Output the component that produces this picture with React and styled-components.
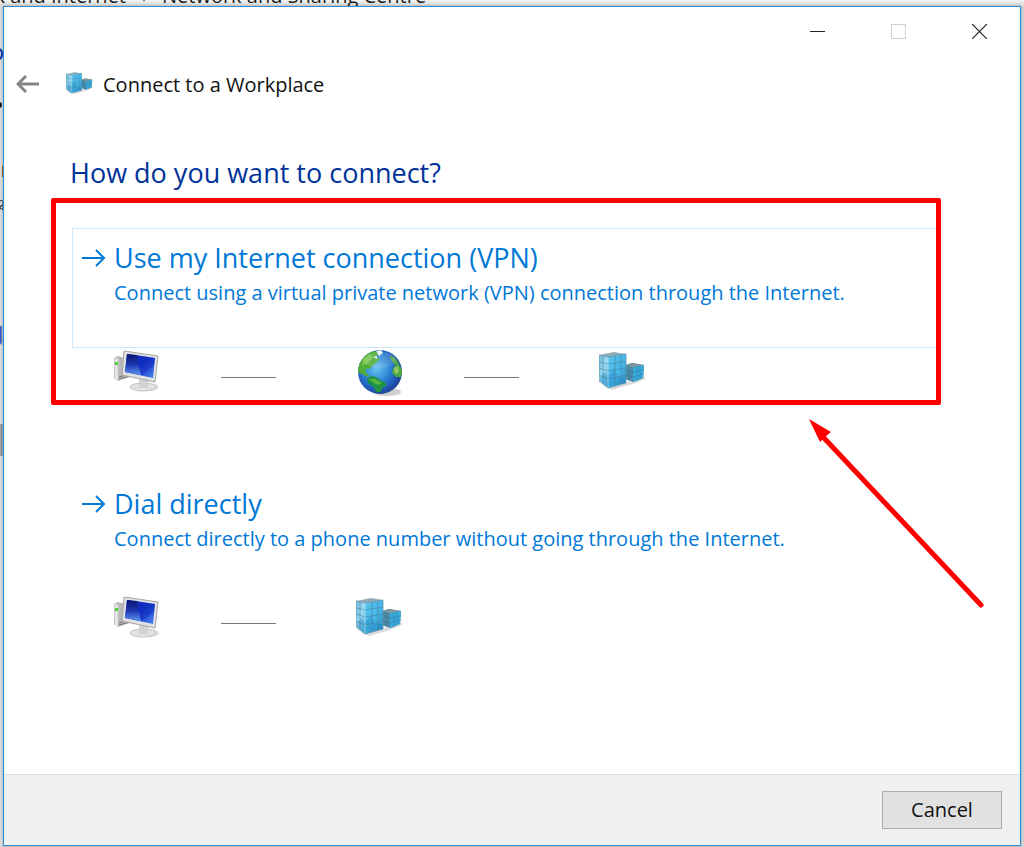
import React from "react";
import styled, { createGlobalStyle } from "styled-components";

const GlobalStyle = createGlobalStyle`
  * { box-sizing: border-box; }
  body {
    margin: 0;
    background: #d6d6d6;
    font-family: "Open Sans", "Noto Sans", sans-serif;
  }
`;

const Desktop = styled.div`
  display: flex;
  flex-direction: column;
  min-height: 100vh;
`;

const Breadcrumb = styled.nav`
  display: flex;
  align-items: flex-end;
  gap: 14px;
  height: 6px;
  overflow: hidden;
  background: linear-gradient(#f2f2f2, #dcdcdc);
  color: #1c1c1c;
  font-size: 20px;
  line-height: 20px;
  white-space: nowrap;
`;

const Crumb = styled.span`
  flex: none;
`;

const CrumbStart = styled(Crumb)`
  width: 126px;
  direction: rtl;
  overflow: hidden;
`;

const Backdrop = styled.div`
  display: flex;
  flex: 1;
  padding: 0 3px 1px 0;
`;

const EdgeArt = styled.svg`
  flex: none;
  width: 3px;
  height: 840px;
`;

const Dialog = styled.main`
  position: relative;
  display: flex;
  flex: 1;
  flex-direction: column;
  border: 1px solid #2f8fdc;
  background: #fff;
  box-shadow: 0 0 3px rgba(0, 0, 0, 0.3);
`;

const TitleBar = styled.div`
  display: flex;
  justify-content: flex-end;
  height: 48px;
`;

const CaptionButton = styled.button`
  display: flex;
  align-items: center;
  justify-content: center;
  width: 81px;
  border: 0;
  padding: 0;
  background: transparent;
  color: ${(p) => (p.disabled ? "#cfcfcf" : "#222")};
`;

const Header = styled.header`
  display: flex;
  align-items: center;
  height: 60px;
  padding-left: 12px;
`;

const BackButton = styled.button`
  display: flex;
  width: 24px;
  margin-right: 26px;
  border: 0;
  padding: 0;
  background: transparent;
`;

const WizardTitle = styled.h1`
  margin: 0 0 0 9px;
  color: #111;
  font-size: 20px;
  font-weight: 400;
  line-height: 28px;
`;

const Content = styled.section`
  flex: 1;
  padding: 39px 82px 40px 68px;
`;

const Question = styled.h2`
  margin: 0 0 36px -2px;
  color: #003399;
  font-size: 27px;
  font-weight: 400;
  line-height: 38px;
`;

const Option = styled.div`
  position: relative;
  margin-bottom: 76px;
`;

const OptionButton = styled.button`
  display: flex;
  align-items: flex-start;
  gap: 8px;
  width: 100%;
  height: 120px;
  border: 1px solid ${(p) => (p.$focused ? "#cfe6f8" : "transparent")};
  padding: 10px 8px;
  background: transparent;
  color: #0078d7;
  font-family: inherit;
  text-align: left;
  white-space: nowrap;
`;

const OptionArrow = styled.svg`
  flex: none;
  margin-top: 8px;
`;

const OptionTitle = styled.span`
  display: block;
  font-size: 27px;
  line-height: 38px;
`;

const OptionText = styled.span`
  display: block;
  font-size: 20px;
  line-height: 32px;
`;

const Route = styled.div`
  display: flex;
  align-items: center;
  height: 50px;
  padding: 2px 0 0 41px;
`;

const Link = styled.span`
  width: 55px;
  height: 1px;
  margin: 6px 80px 0 60px;
  background: #777;
`;

const Highlight = styled.div`
  position: absolute;
  inset: -30px -3px -7px -21px;
  border: 5px solid #f00;
  border-radius: 2px;
  pointer-events: none;
`;

const Pointer = styled.svg`
  position: absolute;
  top: 411px;
  right: 32px;
  pointer-events: none;
`;

const Footer = styled.footer`
  display: flex;
  justify-content: flex-end;
  border-top: 1px solid #dfdfdf;
  padding: 16px 18px;
  background: #f0f0f0;
`;

const CancelButton = styled.button`
  width: 120px;
  height: 38px;
  border: 1px solid #adadad;
  padding: 0;
  background: #e1e1e1;
  color: #111;
  font-family: inherit;
  font-size: 20px;
  line-height: 28px;
`;

function ServersIcon({ width = 48, height = 48 }) {
  return (
    <svg width={width} height={height} viewBox="0 0 48 48" aria-hidden="true">
      <defs>
        <linearGradient id="srvLeft" x1="0" y1="0" x2="1" y2="1">
          <stop offset="0" stopColor="#6fb9dc" />
          <stop offset="0.5" stopColor="#9bdaf2" />
          <stop offset="1" stopColor="#4ba8d6" />
        </linearGradient>
        <linearGradient id="srvRight" x1="0" y1="0" x2="1" y2="1">
          <stop offset="0" stopColor="#5cc4ee" />
          <stop offset="0.6" stopColor="#43b4e6" />
          <stop offset="1" stopColor="#2484b8" />
        </linearGradient>
      </defs>
      <path d="M9 38 L28 32 L34 31 L46 26 L46 29 L34 34 L13 40Z" fill="#999" opacity="0.35" />
      <path d="M26 15 L33 13 L45 15 L44 28 L34 32 L26 29Z" fill="#4b8ba8" />
      <path d="M34 17 L45 15 L44 28 L34 32Z" fill="#3aaadb" />
      <path d="M26 15 L33 13 L45 15 L34 17Z" fill="#7e979f" />
      <path d="M26 20 L34 22 L45 20 M26 24 L34 27 L45 24 M38 17 V31 M41 16 V29 M30 16 V31" stroke="#2a6f90" strokeWidth="1" fill="none" opacity="0.4" />
      <path d="M0 5 L15 2 L27 4 L9 7Z" fill="#8fabb6" />
      <path d="M0 5 L9 7 V38 L0 31Z" fill="url(#srvLeft)" />
      <path d="M9 7 L27 4 V33 L9 38Z" fill="url(#srvRight)" />
      <path d="M1 27 L5 22 L9 26 L13 22 L15 19 L19 27 L26 28 L26 33 L9 37 L1 31Z" fill="#2388c2" opacity="0.4" />
      <path d="M0 12 L9 14 L27 11 M0 18 L9 21 L27 18 M0 25 L9 29 L27 25 M4 6 V34 M16 6 V36 M22 5 V34" stroke="#44809c" strokeWidth="1" fill="none" opacity="0.55" />
      <path d="M9 7 V38" stroke="#b7e5f5" strokeWidth="1" opacity="0.7" />
      <path d="M0 5 L9 7 L27 4 V33 L9 38 L0 31Z" fill="none" stroke="#5f93aa" strokeWidth="1" opacity="0.8" />
    </svg>
  );
}

function ComputerIcon() {
  return (
    <svg width="48" height="48" viewBox="0 0 48 48" aria-hidden="true">
      <defs>
        <linearGradient id="screen" x1="0" y1="0" x2="1" y2="1">
          <stop offset="0" stopColor="#0a1fb4" />
          <stop offset="0.5" stopColor="#1434cc" />
          <stop offset="1" stopColor="#4d86f0" />
        </linearGradient>
        <linearGradient id="glare" x1="0" y1="0" x2="0" y2="1">
          <stop offset="0" stopColor="#0b1470" />
          <stop offset="0.5" stopColor="#1b36b0" />
          <stop offset="1" stopColor="#5f93f0" />
        </linearGradient>
        <linearGradient id="tower" x1="0" y1="0" x2="1" y2="0">
          <stop offset="0" stopColor="#b8b8b8" />
          <stop offset="0.4" stopColor="#f2f2f2" />
          <stop offset="1" stopColor="#c2c2c2" />
        </linearGradient>
      </defs>
      <ellipse cx="35" cy="37" rx="11" ry="4" fill="#aaa" opacity="0.4" />
      <path d="M1 8 L5 6 L12 8 L17 27 L5 31 L1 28Z" fill="#b9b9b9" />
      <path d="M1 8 L6 9 L5 31 L1 28Z" fill="url(#tower)" />
      <path d="M6 27 L16 24 M6 29 L17 26" stroke="#777" strokeWidth="1" />
      <rect x="2" y="12" width="3" height="3" fill="#45d52a" />
      <ellipse cx="30" cy="37" rx="13" ry="4" fill="#e2e2e2" stroke="#c4c4c4" />
      <path d="M26 27 L36 29 L35 38 L26 38Z" fill="#d2d2d2" />
      <path d="M11 1 L45 6 L42 32 L9 25Z" fill="#e0e2e3" stroke="#a6a6a6" />
      <path d="M14 4 L42 8 L40 28 L12 22Z" fill="url(#screen)" />
      <path d="M14 4 L24 5 L28 25 L12 22Z" fill="url(#glare)" />
      <path d="M24 5 L42 8 L41 15 L29 25 L28 25Z" fill="#1029b8" opacity="0.45" />
    </svg>
  );
}

function GlobeIcon() {
  return (
    <svg width="48" height="48" viewBox="0 0 48 48" aria-hidden="true">
      <defs>
        <radialGradient id="ocean" cx="0.42" cy="0.42" r="0.62">
          <stop offset="0" stopColor="#6bc4f2" />
          <stop offset="0.5" stopColor="#2b83d2" />
          <stop offset="0.85" stopColor="#1d4fb0" />
          <stop offset="1" stopColor="#223f86" />
        </radialGradient>
        <clipPath id="globeClip"><circle cx="24" cy="22" r="22" /></clipPath>
      </defs>
      <ellipse cx="31" cy="42" rx="14" ry="4" fill="#888" opacity="0.4" />
      <circle cx="24" cy="22" r="22" fill="url(#ocean)" />
      <g clipPath="url(#globeClip)">
        <path d="M2 14 C6 7 11 2 18 1 L22 3 L20 7 L24 9 L20 13 L16 16 L14 19 L11 18 L9 22 L13 25 L12 27 L6 24 L2 22Z" fill="#4fac34" />
        <path d="M7 9 L14 4 L17 7 L12 13 L6 16Z" fill="#83cc5a" opacity="0.8" />
        <path d="M20 1 L25 0 L27 3 L23 6Z M17 7 L21 6 L21 9Z" fill="#e5f3e9" />
        <path d="M11 29 L15 26 L20 27 L24 30 L30 33 L30 36 L26 38 L25 42 L20 42 L18 37 L12 33Z" fill="#1f9344" />
        <path d="M13 29 L19 29 L26 33 L23 35 L18 33Z" fill="#57b941" />
        <path d="M34 5 L39 8 L43 13 L39 15 L35 10Z M37 18 L42 13 L47 21 L45 27 L40 27 L36 23Z" fill="#4aa647" />
        <path d="M38 18 L42 16 L43 22 L39 24Z" fill="#98c964" />
      </g>
      <ellipse cx="24" cy="10" rx="16" ry="8" fill="#fff" opacity="0.13" />
    </svg>
  );
}

function OptionCard({ title, text, focused, route, children }) {
  return (
    <Option>
      <OptionButton type="button" $focused={focused}>
        <OptionArrow width="25" height="22" viewBox="0 0 25 22" fill="none" stroke="currentColor" strokeWidth="2" aria-hidden="true">
          <path d="M1 11 H23 M15 3 L23 11 L15 19" />
        </OptionArrow>
        <span>
          <OptionTitle>{title}</OptionTitle>
          <OptionText>{text}</OptionText>
        </span>
      </OptionButton>
      <Route>
        {route.map((Icon, i) => (
          <React.Fragment key={i}>
            {i > 0 && <Link />}
            <Icon />
          </React.Fragment>
        ))}
      </Route>
      {children}
    </Option>
  );
}

export default function App() {
  return (
    <Desktop>
      <GlobalStyle />
      <Breadcrumb aria-label="Control panel path">
        <CrumbStart>Network and Internet</CrumbStart>
        <svg width="8" height="6" viewBox="0 0 8 6" aria-hidden="true">
          <path d="M1 -4 L4 0 L7 -4" stroke="#777" strokeWidth="2" fill="none" />
        </svg>
        <Crumb>Network and Sharing Centre</Crumb>
      </Breadcrumb>
      <Backdrop>
        <EdgeArt viewBox="0 0 3 840" aria-hidden="true">
          <rect width="3" height="840" fill="#dedede" />
          <path d="M-2 43 Q2 43 2 48 Q2 53 -2 53" fill="none" stroke="#0b3fae" strokeWidth="2" />
          <circle cx="-1" cy="99" r="3" fill="#14141e" />
          <rect x="2" y="160" width="1" height="11" fill="#b26a10" />
          <path d="M0 195 Q3 193 3 197 V204 M3 199 Q0 199 0 202 Q1 204 3 203" fill="none" stroke="#223" strokeWidth="1" />
          <rect x="-1" y="320" width="3" height="18" fill="#3b56cf" stroke="#9ab" />
          <rect x="-1" y="419" width="3" height="30" fill="#a9a9b5" stroke="#777" />
        </EdgeArt>
        <Dialog>
          <TitleBar>
            <CaptionButton type="button" aria-label="Minimise">
              <svg width="15" height="15" viewBox="0 0 15 15"><path d="M0 7.5 H15" stroke="currentColor" /></svg>
            </CaptionButton>
            <CaptionButton type="button" aria-label="Maximise" disabled>
              <svg width="15" height="15" viewBox="0 0 15 15"><rect x="0.5" y="0.5" width="14" height="14" fill="none" stroke="currentColor" /></svg>
            </CaptionButton>
            <CaptionButton type="button" aria-label="Close">
              <svg width="15" height="15" viewBox="0 0 15 15"><path d="M0 0 L15 15 M15 0 L0 15" stroke="currentColor" strokeWidth="1.2" /></svg>
            </CaptionButton>
          </TitleBar>
          <Header>
            <BackButton type="button" aria-label="Back">
              <svg width="24" height="20" viewBox="0 0 24 20" fill="none" stroke="#858585" strokeWidth="3">
                <path d="M23 9 H3 M10 1 L2 9 L10 17" />
              </svg>
            </BackButton>
            <ServersIcon width={28} height={28} />
            <WizardTitle>Connect to a Workplace</WizardTitle>
          </Header>
          <Content>
            <Question>How do you want to connect?</Question>
            <OptionCard
              focused
              title="Use my Internet connection (VPN)"
              text="Connect using a virtual private network (VPN) connection through the Internet."
              route={[ComputerIcon, GlobeIcon, ServersIcon]}
            >
              <Highlight />
            </OptionCard>
            <OptionCard
              title="Dial directly"
              text="Connect directly to a phone number without going through the Internet."
              route={[ComputerIcon, ServersIcon]}
            />
          </Content>
          <Footer>
            <CancelButton type="button">Cancel</CancelButton>
          </Footer>
          <Pointer width="180" height="192" viewBox="0 0 180 192" aria-hidden="true">
            <path d="M16 20 L173 187" stroke="#f00" strokeWidth="5" strokeLinecap="round" />
            <path d="M1 1 L23 14 L17 19 L12 24Z" fill="#f00" />
          </Pointer>
        </Dialog>
      </Backdrop>
    </Desktop>
  );
}
